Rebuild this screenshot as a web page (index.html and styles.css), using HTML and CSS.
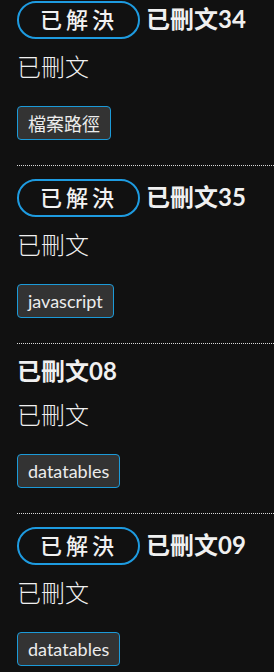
FILE: index.html
```html
<!DOCTYPE html>
<html lang="zh-Hant">
<head>
<meta charset="utf-8">
<title>Questions</title>
<link rel="stylesheet" href="styles.css">
</head>
<body>
<div class="list">
  <div class="item">
    <div class="head"><span class="badge">已解決</span><span class="title">已刪文34</span></div>
    <p class="excerpt">已刪文</p>
    <div class="tags"><span class="tag">檔案路徑</span></div>
  </div>
  <div class="item">
    <div class="head"><span class="badge">已解決</span><span class="title">已刪文35</span></div>
    <p class="excerpt">已刪文</p>
    <div class="tags"><span class="tag">javascript</span></div>
  </div>
  <div class="item">
    <div class="head"><span class="title">已刪文08</span></div>
    <p class="excerpt">已刪文</p>
    <div class="tags"><span class="tag">datatables</span></div>
  </div>
  <div class="item">
    <div class="head"><span class="badge">已解決</span><span class="title">已刪文09</span></div>
    <p class="excerpt">已刪文</p>
    <div class="tags"><span class="tag">datatables</span></div>
  </div>
</div>
</body>
</html>
```
FILE: styles.css
```css
html, body {
  margin: 0;
  padding: 0;
  background: #111111;
  color: #f0f0f0;
  font-family: "Lato", "Noto Sans CJK TC", sans-serif;
}

.list {
  padding-left: 17px;
}

.item {
  padding: 13px 0 25px;
  border-bottom: 1px dotted #d8d8d8;
}

.item:first-child {
  padding-top: 1px;
}

.head {
  display: flex;
  align-items: center;
  gap: 6px;
}

.badge {
  box-sizing: border-box;
  height: 38px;
  display: inline-flex;
  align-items: center;
  padding: 0 20px 0 21px;
  border: 2px solid #1e9be0;
  border-radius: 19px;
  font-size: 22px;
  letter-spacing: 4px;
  font-weight: 500;
  line-height: 1;
  color: #f2f2f2;
}

.title {
  font-size: 24px;
  font-weight: 700;
  line-height: 27px;
  margin-bottom: 3px;
}

.excerpt {
  margin: 10px 0 0;
  font-size: 24px;
  font-weight: 300;
  line-height: 36px;
}

.tags {
  margin-top: 21px;
  display: flex;
}

.tag {
  box-sizing: border-box;
  height: 34px;
  display: inline-flex;
  align-items: center;
  padding: 0 10px;
  background: #333333;
  border: 1px solid #1c9ad8;
  border-radius: 4px;
  font-size: 18px;
  color: #ececec;
}
```
